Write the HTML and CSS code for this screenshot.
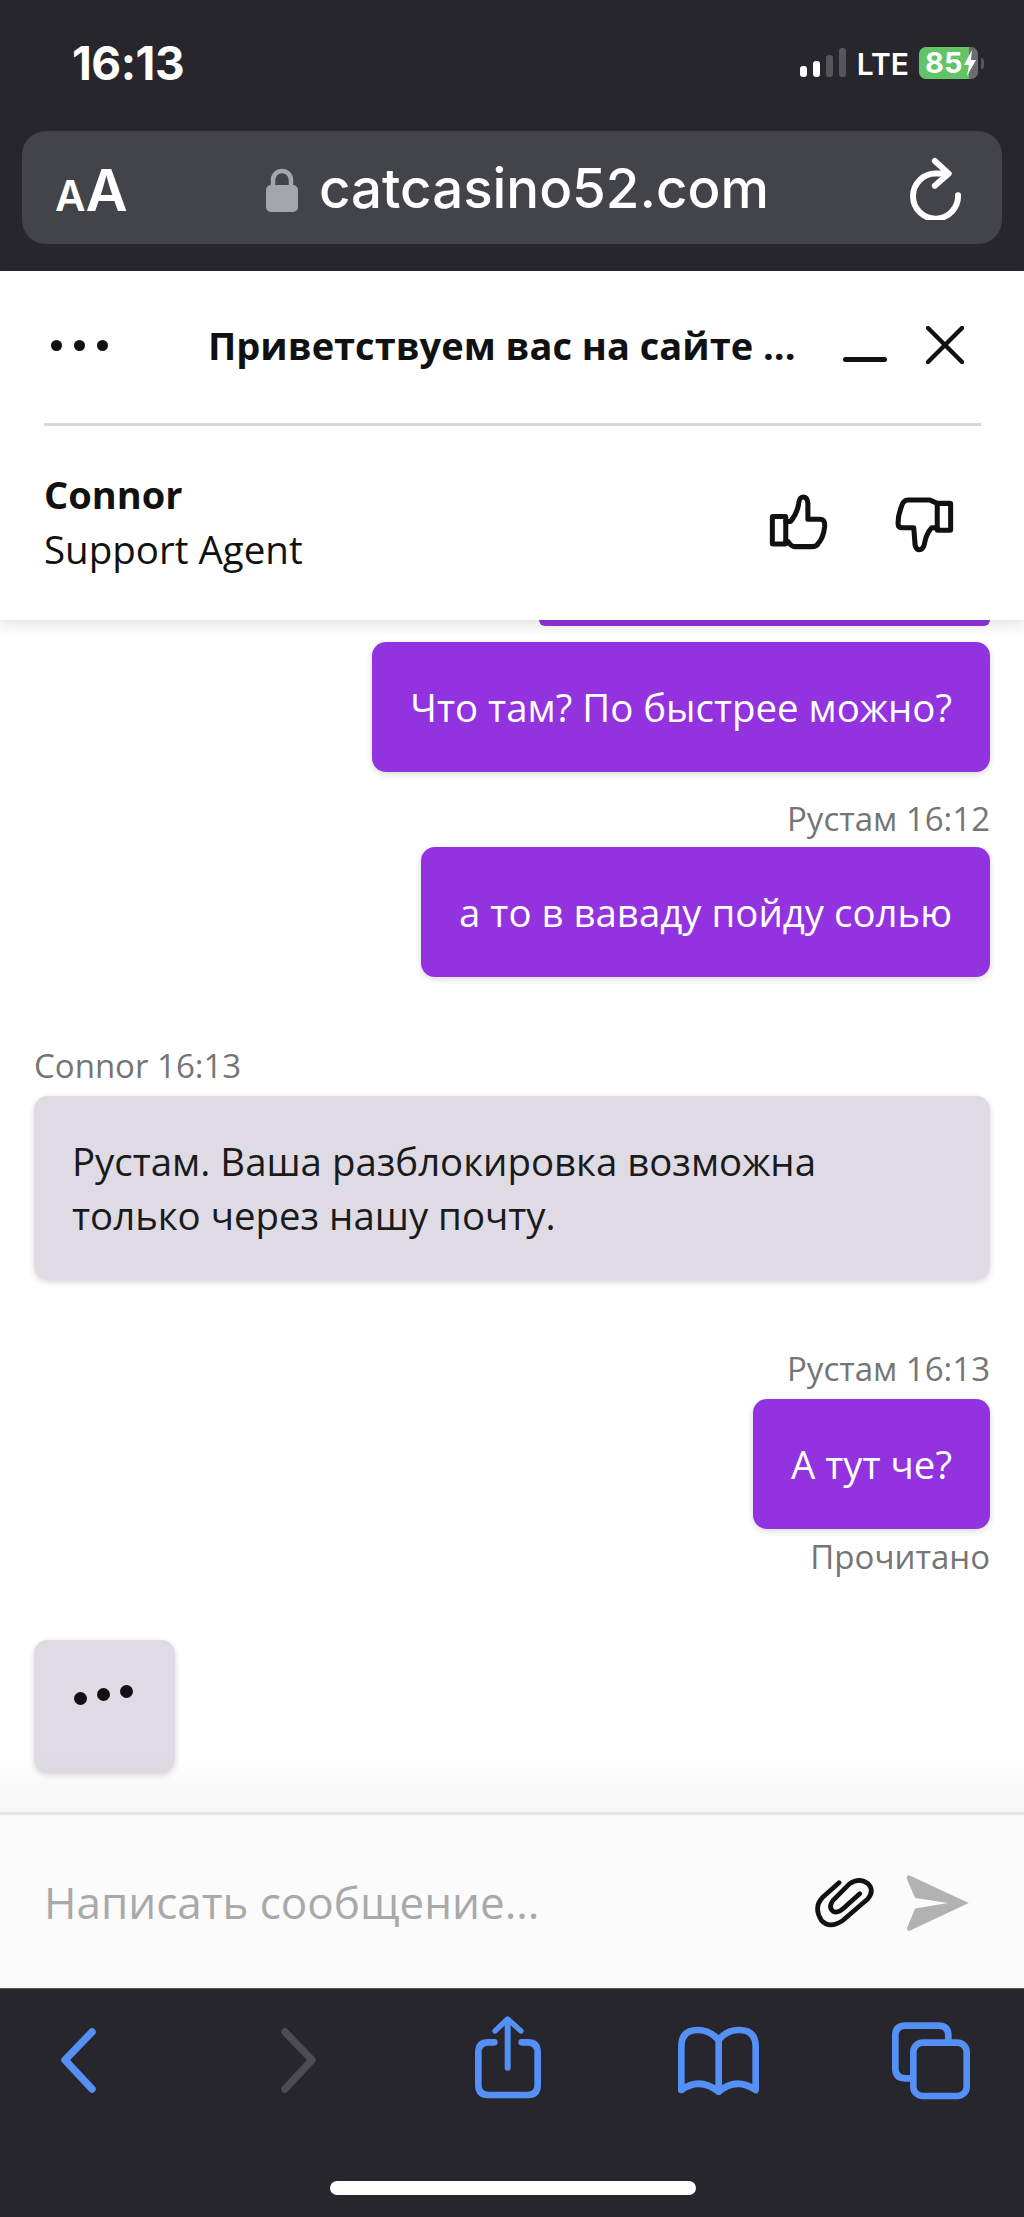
FILE: index.html
```html
<!DOCTYPE html>
<html lang="ru">
<head>
<meta charset="utf-8">
<title>catcasino52.com</title>
<link rel="stylesheet" href="styles.css">
</head>
<body>
<div class="phone">
  <header class="browser-top">
    <div class="status">
      <span class="clock">16:13</span>
      <div class="status-right">
        <div class="signal"><i class="b1"></i><i class="b2"></i><i class="b3 off"></i><i class="b4 off"></i></div>
        <span class="lte">LTE</span>
        <div class="battery"><span>85</span>
          <svg class="bolt" viewBox="0 0 14 26"><path d="M9 0 L1 15 H6 L4 26 L13 10 H8 Z" fill="#fff"/></svg>
        </div>
        <i class="battery-tip"></i>
      </div>
    </div>
    <div class="urlbar">
      <span class="aa"><small>A</small>A</span>
      <div class="domain">
        <svg class="lock" viewBox="0 0 32 44"><path d="M7 20 V12 A9 9 0 0 1 25 12 V20" fill="none" stroke="#a5a6ab" stroke-width="4.5"/><rect x="0" y="17" width="32" height="27" rx="5" fill="#a5a6ab"/></svg>
        <span>catcasino52.com</span>
      </div>
      <svg class="reload" viewBox="60 35 160 190"><path d="M160 85 H137 A68 68 0 1 0 205 150" fill="none" stroke="#fff" stroke-width="18" stroke-linecap="round"/><path d="M135 47 L177 85 L135 122" fill="none" stroke="#fff" stroke-width="18" stroke-linecap="round" stroke-linejoin="round"/></svg>
    </div>
  </header>

  <section class="chat-head">
    <div class="title-row">
      <div class="menu-dots"><i></i><i></i><i></i></div>
      <h1 class="title">Приветствуем вас на сайте ...</h1>
      <i class="minimize"></i>
      <svg class="close" viewBox="0 0 38 38"><path d="M2 2 L36 36 M36 2 L2 36" stroke="#111" stroke-width="4.4" stroke-linecap="round"/></svg>
    </div>
    <div class="agent-row">
      <div class="agent">
        <div class="agent-name">Connor</div>
        <div class="agent-role">Support Agent</div>
      </div>
      <svg class="thumb up" viewBox="205 100 182 173"><g fill="none" stroke="#111" stroke-width="15" stroke-linejoin="round" stroke-linecap="round"><rect x="218" y="170" width="40" height="82" rx="2"/><path d="M258 185 H272 Q290 165 296 135 Q298 112 310 112 Q322 112 324 130 L324 178 H360 Q376 178 374 200 Q370 235 355 250 Q350 260 335 260 H285 Q275 260 265 245 H258"/></g></svg>
      <svg class="thumb down" viewBox="583 108 182 173"><g fill="none" stroke="#111" stroke-width="15" stroke-linejoin="round" stroke-linecap="round"><rect x="712" y="130" width="40" height="80" rx="2"/><path d="M712 130 L690 120 H625 Q610 120 605 140 Q595 165 595 190 Q595 203 610 203 H642 L646 255 Q650 270 662 268 Q672 265 675 245 Q680 220 695 203 H712"/></g></svg>
    </div>
  </section>

  <main class="messages">
    <div class="stub"></div>
    <div class="bubble mine first">Что там? По быстрее можно?</div>
    <div class="meta mine-meta m1">Рустам 16:12</div>
    <div class="bubble mine">а то в ваваду пойду солью</div>
    <div class="meta m2">Connor 16:13</div>
    <div class="bubble theirs">Рустам. Ваша разблокировка возможна только через нашу почту.</div>
    <div class="meta mine-meta m3">Рустам 16:13</div>
    <div class="bubble mine">А тут че?</div>
    <div class="meta mine-meta m4">Прочитано</div>
    <div class="typing"><i></i><i></i><i></i></div>
  </main>

  <section class="composer">
    <span class="placeholder">Написать сообщение...</span>
    <svg class="clip" viewBox="100 72 192 168"><path d="M178 92 L130 135 Q100 165 125 205 Q150 232 190 205 L265 140 Q285 115 265 95 Q240 75 210 95 L160 145 Q145 165 160 178 Q175 185 190 170 L240 125" fill="none" stroke="#111" stroke-width="14" stroke-linecap="round" stroke-linejoin="round"/></svg>
    <svg class="send" viewBox="378 68 190 170"><path d="M387 69 L568 153 L387 238 Q378 235 382 225 L405 170 L505 153 L405 138 L380 80 Q379 70 387 69 Z" fill="#b2b2b2"/></svg>
  </section>

  <footer class="browser-bottom">
    <nav class="tools">
      <svg class="t-back" viewBox="0 0 36 90"><path d="M32 16 L5 44 L32 73" fill="none" stroke="#5490f5" stroke-width="7.5" stroke-linecap="round" stroke-linejoin="round"/></svg>
      <svg class="t-fwd" viewBox="0 0 36 90"><path d="M4 16 L31 44 L4 73" fill="none" stroke="#4c4d50" stroke-width="7.5" stroke-linecap="round" stroke-linejoin="round"/></svg>
      <svg class="t-share" viewBox="42 33 198 270"><g fill="none" stroke="#5490f5" stroke-linecap="round" stroke-linejoin="round"><path d="M100 112 H82 Q52 112 52 142 V240 Q52 270 82 270 H200 Q230 270 230 240 V142 Q230 112 200 112 H182" stroke-width="20"/><path d="M140 45 V188" stroke-width="18"/><path d="M102 78 L140 42 L180 78" stroke-width="16"/></g></svg>
      <svg class="t-book" viewBox="655 33 246 270"><path d="M777 105 Q750 75 715 75 Q665 75 665 125 V255 Q720 215 777 260 Q830 215 888 255 V125 Q888 75 838 75 Q800 75 777 105 V260" fill="none" stroke="#5490f5" stroke-width="20" stroke-linecap="round" stroke-linejoin="round"/></svg>
      <svg class="t-tabs" viewBox="36 18 234 270"><g fill="none" stroke="#5490f5" stroke-width="20"><path d="M92 205 H75 Q46 205 46 175 V77 Q46 47 76 47 H175 Q205 47 205 77 V90"/><rect x="100" y="98" width="160" height="160" rx="28"/></g></svg>
    </nav>
    <div class="home-indicator"></div>
  </footer>
</div>
</body>
</html>
```
FILE: styles.css
```css
* { box-sizing: border-box; }
html, body { margin: 0; padding: 0; }
body { background: #fff; font-family: "Open Sans", "Noto Sans", sans-serif; color: #111; }
i { display: block; }
.phone { width: 1024px; height: 2217px; display: flex; flex-direction: column; overflow: hidden; }

.browser-top { height: 271px; background: #26262c; padding: 46px 22px 0; color: #fff; font-family: Inter, sans-serif; }
.status { display: flex; justify-content: space-between; align-items: flex-start; height: 85px; padding: 0 18px 0 50px; }
.clock { font-size: 46px; font-weight: 700; line-height: 34px; letter-spacing: -.5px; }
.status-right { display: flex; align-items: flex-end; height: 33px; }
.signal { display: flex; align-items: flex-end; gap: 6px; height: 29px; margin: 0 0 2px; }
.signal i { width: 7px; background: #fff; border-radius: 3px; }
.signal .b1 { height: 11px; }
.signal .b2 { height: 16px; }
.signal .b3 { height: 22px; }
.signal .b4 { height: 29px; }
.signal .off { background: #55565a; }
.lte { font-size: 30px; font-weight: 600; line-height: 30px; margin: 0 10px 0 11px; }
.battery { width: 59px; height: 32px; border-radius: 7px; background: linear-gradient(90deg, #62c467 85%, #6b6b70 85%); display: flex; align-items: center; padding-left: 6px; font-size: 29px; font-weight: 700; line-height: 32px; }
.bolt { width: 14px; height: 26px; margin-left: 1px; }
.battery-tip { width: 3px; height: 11px; background: #55565a; border-radius: 0 3px 3px 0; margin: 0 0 10px 3px; }

.urlbar { height: 113px; background: #434449; border-radius: 24px; display: flex; align-items: center; padding: 0 39px 0 33px; }
.aa { width: 211px; font-size: 58px; font-weight: 600; line-height: 1; padding-top: 4px; }
.aa small { font-size: 42px; }
.domain { flex: 1; display: flex; align-items: center; gap: 21px; font-size: 54.6px; font-weight: 500; line-height: 60px; }
.lock { width: 32px; height: 44px; margin-top: 4px; }
.reload { width: 53px; height: 63px; margin-top: 2px; }

.chat-head { position: relative; z-index: 2; height: 349px; background: #fff; padding: 0 43px 0 44px; box-shadow: 0 4px 14px rgba(0,0,0,.13); }
.title-row { height: 155px; border-bottom: 3px solid #d8d8d8; display: flex; align-items: center; padding-bottom: 4px; }
.menu-dots { display: flex; gap: 12px; width: 164px; padding-left: 7px; }
.menu-dots i { width: 11px; height: 11px; border-radius: 50%; background: #111; }
.title { margin: 0; font-size: 38px; font-weight: 700; line-height: 48px; width: 635px; white-space: nowrap; }
.minimize { width: 44px; height: 5px; background: #111; border-radius: 3px; margin-top: 28px; }
.close { width: 38px; height: 38px; margin-left: 39px; }
.agent-row { display: flex; align-items: center; height: 192px; }
.agent { flex: 1; }
.agent-name { font-size: 38px; font-weight: 700; line-height: 54px; }
.agent-role { font-size: 38.5px; line-height: 56px; }
.thumb { width: 61px; height: 58px; }
.down { margin: 6px 26px 0 65px; }

.messages { position: relative; flex: 1; padding: 0 34px; display: flex; flex-direction: column; align-items: flex-end; overflow: hidden; background: #fff; }
.messages::after { content: ""; position: absolute; left: 0; right: 0; bottom: 0; height: 60px; background: linear-gradient(rgba(0,0,0,0), rgba(0,0,0,.035)); }
.stub { width: 451px; height: 6px; background: #9333df; border-radius: 0 0 10px 10px; flex: none; }
.bubble { border-radius: 14px; padding: 38px 38px; font-size: 38.4px; line-height: 54px; box-shadow: 0 2px 6px rgba(0,0,0,.16); flex: none; }
.mine { background: #9333df; color: #fff; }
.first { margin-top: 16px; }
.theirs { background: #dedbe5; color: #1a1a1a; align-self: stretch; padding-right: 120px; }
.meta { font-size: 33px; line-height: 40px; color: #757575; flex: none; }
.m1 { margin-top: 27px; margin-bottom: 8px; }
.m2 { align-self: flex-start; margin-top: 69px; margin-bottom: 10px; }
.m3 { margin-top: 69px; margin-bottom: 10px; }
.m4 { margin-top: 8px; }
.typing { align-self: flex-start; width: 141px; height: 133px; margin-top: 63px; background: #dedbe5; border-radius: 14px; box-shadow: 0 2px 6px rgba(0,0,0,.16); display: flex; gap: 10px; padding: 52px 0 0 40px; flex: none; }
.typing i { width: 13px; height: 13px; border-radius: 50%; background: #111; }
.typing i:nth-child(2) { margin-top: -4px; }
.typing i:nth-child(3) { margin-top: -7px; }

.composer { height: 176px; flex: none; background: #fbfbfb; border-top: 3px solid #e4e4e4; display: flex; align-items: center; padding: 0 55px 0 44px; }
.placeholder { flex: 1; font-size: 44px; color: #a9a9a9; line-height: 48px; }
.clip { width: 64px; height: 56px; margin-right: 29px; margin-top: 4px; }
.send { width: 63px; height: 56px; margin-top: 2px; }

.browser-bottom { height: 229px; flex: none; background: #26262c; border-top: 1px solid #55555a; }
.tools { display: grid; grid-template-columns: 221px 194px 203px 214px 78px; padding: 27px 0 0 60px; }
.tools svg { height: 90px; display: block; }
.t-back, .t-fwd { width: 36px; }
.t-share { width: 66px; }
.t-book { width: 82px; }
.t-tabs { width: 78px; }
.home-indicator { width: 366px; height: 14px; background: #fff; border-radius: 7px; margin: 75px 0 0 330px; }
```
